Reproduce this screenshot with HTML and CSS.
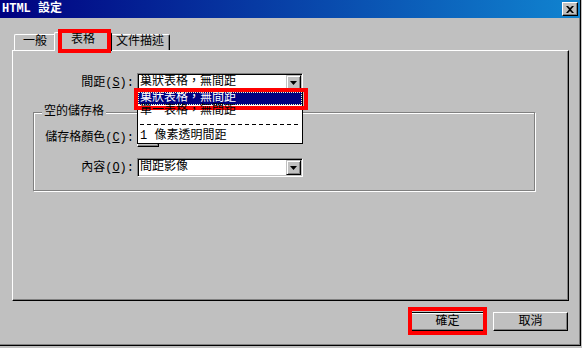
FILE: index.html
```html
<!DOCTYPE html>
<html lang="zh-Hant">
<head>
    <meta charset="UTF-8">
    <title>HTML 設定</title>
    <link rel="stylesheet" href="styles.css">
</head>
<body>
    <div class="window">
        <div class="titlebar">
            <span class="title">HTML 設定</span>
            <button class="closeBtn">
                <svg width="8" height="7" viewBox="0 0 8 7"><path d="M0 0h2l2 2 2-2h2L5 3.5 8 7H6L4 5 2 7H0l3-3.5z" fill="#000"/></svg>
            </button>
        </div>
        <div class="dialogBody">
            <div class="tabs">
                <div class="tab tabGeneral">一般</div>
                <div class="tab tabTable active">表格<span class="mark markTab"></span></div>
                <div class="tab tabDoc">文件描述</div>
            </div>
            <div class="panel">
                <div class="field spacingField">
                    <label class="fieldLabel">間距(<u>S</u>):</label>
                    <div class="combo">
                        <span class="comboValue">巢狀表格，無間距</span>
                        <span class="comboArrow"><svg width="7" height="4" viewBox="0 0 7 4"><polygon points="0,0 7,0 3.5,4" fill="#000"/></svg></span>
                        <ul class="comboList">
                            <li class="selected">巢狀表格，無間距<span class="mark markItem"></span></li>
                            <li>單一表格，無間距</li>
                            <li class="separator"></li>
                            <li>1 像素透明間距</li>
                        </ul>
                    </div>
                </div>
                <fieldset class="group">
                    <legend>空的儲存格</legend>
                    <div class="field colorField">
                        <label class="fieldLabel">儲存格顏色(<u>C</u>):</label>
                        <button class="colorBtn"><svg width="7" height="4" viewBox="0 0 7 4"><polygon points="0,0 7,0 3.5,4" fill="#000"/></svg></button>
                    </div>
                    <div class="field contentField">
                        <label class="fieldLabel">內容(<u>O</u>):</label>
                        <div class="combo">
                            <span class="comboValue">間距影像</span>
                            <span class="comboArrow"><svg width="7" height="4" viewBox="0 0 7 4"><polygon points="0,0 7,0 3.5,4" fill="#000"/></svg></span>
                        </div>
                    </div>
                </fieldset>
            </div>
            <div class="actions">
                <button class="pushBtn default">確定<span class="mark markBtn"></span></button>
                <button class="pushBtn">取消</button>
            </div>
        </div>
    </div>
</body>
</html>
```

FILE: styles.css
```css
body {
    margin: 0;
    background: #c0c0c0;
    font-family: "Liberation Mono", "Noto Sans CJK TC", monospace;
    font-size: 12px;
    line-height: 12px;
    color: #000;
}

.window {
    width: 581px;
    height: 346px;
    box-sizing: border-box;
    border-right: 1px solid #000;
    border-bottom: 1px solid #000;
    box-shadow: inset -1px -1px 0 #808080;
}

.titlebar {
    height: 18px;
    display: flex;
    align-items: center;
    justify-content: space-between;
    padding: 0 2px;
    background: linear-gradient(to right, #000080, #1084d0);
    color: #fff;
    font-weight: bold;
}

.closeBtn {
    width: 16px;
    height: 14px;
    padding: 0;
    box-sizing: border-box;
    background: #c0c0c0;
    border: 1px solid;
    border-color: #fff #000 #000 #fff;
    box-shadow: inset -1px -1px 0 #808080;
    display: flex;
    align-items: center;
    justify-content: center;
}

.dialogBody {
    padding: 14px 0 0 12px;
}

.tabs {
    display: flex;
    align-items: flex-end;
    height: 18px;
    padding-left: 2px;
}

.tab {
    box-sizing: border-box;
    height: 16px;
    border: 1px solid #fff;
    border-bottom: none;
    border-right-color: #000;
    border-radius: 2px 2px 0 0;
    box-shadow: inset -1px 0 0 #808080;
    background: #c0c0c0;
    text-align: center;
    line-height: 15px;
}

.tabGeneral {
    width: 42px;
}

.tabTable {
    width: 54px;
}

.tabDoc {
    width: 60px;
}

.tab.active {
    position: relative;
    z-index: 2;
    width: 58px;
    height: 19px;
    margin: 0 -2px -1px;
}

.panel {
    position: relative;
    width: 557px;
    height: 251px;
    box-sizing: border-box;
    border: 1px solid;
    border-color: #fff #000 #000 #fff;
    box-shadow: inset -1px -1px 0 #808080;
}

.field {
    display: flex;
    align-items: center;
}

.spacingField {
    margin-top: 22px;
}

.fieldLabel {
    width: 121px;
    margin-right: 3px;
    text-align: right;
}

.group .fieldLabel {
    width: 100px;
}

.combo {
    position: relative;
    width: 166px;
    height: 19px;
    box-sizing: border-box;
    display: flex;
    align-items: center;
    padding: 1px 1px 1px 2px;
    background: #fff;
    border: 1px solid;
    border-color: #808080 #fff #fff #808080;
    box-shadow: inset 1px 1px 0 #000, inset -1px -1px 0 #c0c0c0;
}

.comboValue {
    flex: 1;
    line-height: 15px;
}

.comboArrow {
    width: 15px;
    height: 15px;
    box-sizing: border-box;
    display: flex;
    align-items: center;
    justify-content: center;
    background: #c0c0c0;
    border: 1px solid;
    border-color: #c0c0c0 #000 #000 #c0c0c0;
    box-shadow: inset 1px 1px 0 #fff, inset -1px -1px 0 #808080;
}

.comboList {
    position: absolute;
    left: -1px;
    top: 17px;
    z-index: 5;
    width: 166px;
    box-sizing: border-box;
    margin: 0;
    padding: 0;
    list-style: none;
    background: #fff;
    border: 1px solid #000;
}

.comboList li {
    position: relative;
    height: 13px;
    line-height: 13px;
    padding-left: 2px;
}

.comboList li.selected {
    background: #000080;
    color: #fff;
    outline: 1px dotted #ffffc0;
    outline-offset: -1px;
}

.comboList li.separator {
    height: 12px;
    margin: 0 2px;
    padding: 0;
    background: repeating-linear-gradient(to right, #000 0 4px, transparent 4px 7px) center / 100% 1px no-repeat;
}

.group {
    width: 502px;
    box-sizing: border-box;
    min-width: 0;
    margin: 14px 0 0 20px;
    padding: 0 0 13px;
    border: 1px solid #808080;
    box-shadow: inset 1px 1px 0 #fff, 1px 1px 0 #fff;
}

.group legend {
    margin-left: 8px;
    padding: 0 2px;
    line-height: 12px;
    background: #c0c0c0;
}

.colorField {
    margin-top: 10px;
}

.contentField {
    margin-top: 11px;
}

.colorBtn {
    width: 22px;
    height: 19px;
    box-sizing: border-box;
    padding: 0 3px 2px 0;
    display: flex;
    align-items: flex-end;
    justify-content: flex-end;
    background: #c0c0c0;
    border: 1px solid;
    border-color: #fff #000 #000 #fff;
    box-shadow: inset -1px -1px 0 #808080;
}

.actions {
    display: flex;
    justify-content: flex-end;
    gap: 8px;
    width: 557px;
    box-sizing: border-box;
    padding-right: 1px;
    margin-top: 11px;
}

.pushBtn {
    position: relative;
    width: 75px;
    height: 19px;
    box-sizing: border-box;
    padding: 0;
    font: inherit;
    color: #000;
    background: #c0c0c0;
    border: 1px solid;
    border-color: #fff #000 #000 #fff;
    box-shadow: inset -1px -1px 0 #808080;
}

.pushBtn.default {
    border-color: #000;
    box-shadow: inset 1px 1px 0 #fff, inset -1px -1px 0 #808080;
}

.mark {
    position: absolute;
    box-sizing: border-box;
    border: 4px solid #ff0000;
    pointer-events: none;
}

.markTab {
    left: 3px;
    top: -4px;
    width: 53px;
    height: 24px;
}

.markItem {
    left: -4px;
    top: -4px;
    width: 174px;
    height: 22px;
}

.markBtn {
    left: -3px;
    top: -6px;
    width: 79px;
    height: 28px;
}
```
